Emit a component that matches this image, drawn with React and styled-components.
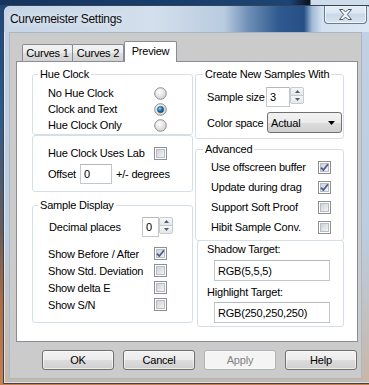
import React from 'react';
import styled, { createGlobalStyle } from 'styled-components';

const Global = createGlobalStyle`
  html, body { margin: 0; padding: 0; }
  body {
    width: 369px; height: 385px; overflow: hidden;
    font-family: "Liberation Sans", Arial, sans-serif;
    font-size: 11px; letter-spacing: -0.2px; color: #000;
  }
`;

const Desktop = styled.div`
  width: 369px; height: 385px; overflow: hidden; box-sizing: border-box;
  padding: 5px 0 0 3px;
  background:
    linear-gradient(90deg, #15345e 0, #1c4474 290px, #0b1628 307px, #0b1628 310px, #cfdcea 311px) top / 100% 5px no-repeat,
    linear-gradient(180deg, #1d4677 0, #2b5a8b 110px, #6a5a58 230px, #b06a3c 300px, #c98049 385px);
`;

const Window = styled.div`
  width: 370px; height: 379px; box-sizing: border-box;
  border: 1px solid #34455a; border-radius: 7px 7px 0 0;
  background: linear-gradient(180deg, #c2d2e4 0, #bccde0 60%, #c7b7a8 100%);
  box-shadow: inset 0 0 0 1px rgba(255,255,255,0.55);
  display: flex; flex-direction: column;
  overflow: hidden;
`;

const TitleBar = styled.div`
  height: 26px; flex: none;
  display: flex; align-items: flex-start;
  background: linear-gradient(90deg, #c6d5e6 0, #d3dfec 150px, #b9cbe0 220px, #6d8db5 245px, #2f5a8f 275px, #264f85 300px, #9fb9d6 308px, #d3e1f0 318px, #dce7f3 370px);
  border-radius: 6px 6px 0 0;
`;

const Title = styled.div`
  height: 26px; line-height: 26px;
  padding-left: 6px;
  font-size: 12px; letter-spacing: -0.3px;
  color: #0c0c0c;
  text-shadow: 0 0 6px rgba(255,255,255,0.9);
  flex: 1;
`;

const CloseButton = styled.div`
  width: 43px; height: 19px; box-sizing: border-box;
  margin: -1px 5px 0 0;
  border: 1px solid #6b7a8e; border-top: none;
  border-radius: 0 0 4px 4px;
  background: linear-gradient(180deg, #e9f0f7 0, #dbe6f1 45%, #c9d8e8 50%, #d6e3f0 100%);
  box-shadow: inset 0 0 0 1px rgba(255,255,255,0.7);
  display: flex; align-items: center; justify-content: center;
`;

const Client = styled.div`
  width: 353px; height: 347px; box-sizing: border-box;
  margin-left: 5px; flex: none;
  background: #cbcbcb;
  border: 1px solid #aab6c4;
  display: flex; flex-direction: column;
`;

const TabStrip = styled.div`
  display: flex; align-items: flex-end;
  height: 20px; margin: 8px 0 0 12px;
  position: relative; z-index: 1;
`;

const Tab = styled.div`
  box-sizing: border-box;
  width: ${p => p.$w}px;
  height: ${p => (p.$active ? 21 : 17)}px;
  margin-left: ${p => p.$ml || 0}px;
  margin-bottom: ${p => (p.$active ? -1 : 0)}px;
  border: 1px solid #898c95; border-bottom: none;
  border-radius: 2px 2px 0 0;
  background: ${p => (p.$active ? '#ffffff' : 'linear-gradient(180deg, #f3f3f3 0, #ebebeb 50%, #dedede 50%, #d2d2d2 100%)')};
  display: flex; align-items: center; justify-content: center;
  padding-bottom: ${p => (p.$active ? 3 : 0)}px;
`;

const Panel = styled.div`
  width: 342px; height: 281px; box-sizing: border-box;
  margin-left: 6px;
  border: 1px solid #898c95;
  background: #fff;
  display: flex; gap: 2px;
  padding: 5px 0 0 15px;
`;

const Column = styled.div`
  width: ${p => p.$w}px; flex: none;
  display: flex; flex-direction: column;
`;

const Group = styled.fieldset`
  margin: ${p => p.$mt || 0}px 0 0 ${p => p.$ml || 0}px;
  padding: 0;
  border: 1px solid #d5dfe5;
  border-radius: 3px;
  min-width: 0;
  box-sizing: border-box;
`;

const Legend = styled.legend`
  margin-left: ${p => p.$ml}px;
  padding: 0 2px;
  height: 14px; line-height: 14px;
`;

const GroupBody = styled.div`
  padding: ${p => p.$pt}px 0 ${p => p.$pb}px ${p => p.$pl || 0}px;
  display: flex; flex-direction: column;
`;

const OptionRow = styled.div`
  height: ${p => p.$h}px;
  margin-top: ${p => p.$mt || 0}px;
  padding: 0 ${p => p.$pr || 0}px 0 ${p => p.$pl || 0}px;
  display: flex; align-items: center; justify-content: space-between;
`;

const FieldRow = styled.div`
  height: ${p => p.$h}px;
  margin-top: ${p => p.$mt || 0}px;
  padding-left: ${p => p.$pl || 0}px;
  display: flex; align-items: center;
`;

const Label = styled.span`
  width: ${p => (p.$w ? `${p.$w}px` : 'auto')};
  flex: none;
  margin-left: ${p => p.$ml || 0}px;
  white-space: nowrap;
`;

const TextBox = styled.div`
  box-sizing: border-box;
  width: ${p => p.$w}px; height: ${p => p.$h}px;
  margin-left: ${p => p.$ml || 0}px;
  margin-top: ${p => p.$mt || 0}px;
  border: 1px solid #c4c8ce;
  border-top-color: #b4b8bf;
  background: #fff;
  padding-left: 3px;
  display: flex; align-items: center;
  flex: none;
`;

const SpinButtons = styled.div`
  width: 14px; flex: none;
  display: flex; flex-direction: column;
  align-self: flex-start;
`;

const SpinBtn = styled.div`
  height: 9px; box-sizing: border-box;
  border: 1px solid #c6cbd2;
  border-radius: ${p => (p.$up ? '2px 2px 0 0' : '0 0 2px 2px')};
  margin-top: ${p => (p.$up ? 0 : -1)}px;
  background: linear-gradient(180deg, #f7f7f7 0, #e6e6e6 100%);
  display: flex; align-items: center; justify-content: center;
`;

const Select = styled.div`
  box-sizing: border-box;
  width: ${p => p.$w}px; height: 21px;
  border: 1px solid #707070; border-radius: 3px;
  background: linear-gradient(180deg, #f2f2f2 0, #ebebeb 50%, #dddddd 50%, #cfcfcf 100%);
  display: flex; align-items: center; justify-content: space-between;
  padding: 0 6px 0 3px;
`;

const TargetLabel = styled.div`
  height: 15px; line-height: 15px;
  margin-top: ${p => p.$mt || 0}px;
`;

const ButtonRow = styled.div`
  display: flex; gap: 9px;
  margin: 8px 0 0 32px;
`;

const Button = styled.div`
  width: 72px; height: 20px; box-sizing: border-box;
  border: 1px solid ${p => (p.$disabled ? '#adb2b5' : '#707070')};
  border-radius: 3px;
  background: ${p => (p.$disabled ? '#f4f4f4' : 'linear-gradient(180deg, #f2f2f2 0, #ebebeb 50%, #dddddd 50%, #cfcfcf 100%)')};
  box-shadow: inset 0 0 0 1px ${p => (p.$disabled ? 'rgba(255,255,255,0.4)' : 'rgba(255,255,255,0.6)')};
  color: ${p => (p.$disabled ? '#838383' : '#000')};
  display: flex; align-items: center; justify-content: center;
`;

function Radio({ checked }) {
  return (
    <svg width="13" height="13" viewBox="0 0 13 13">
      <defs>
        <radialGradient id="rbg" cx="40%" cy="35%" r="70%">
          <stop offset="0" stopColor="#ffffff" />
          <stop offset="1" stopColor="#cfcfcf" />
        </radialGradient>
        <radialGradient id="rdot" cx="40%" cy="35%" r="70%">
          <stop offset="0" stopColor="#9fd8f7" />
          <stop offset="0.45" stopColor="#2a7fb8" />
          <stop offset="1" stopColor="#0d3c62" />
        </radialGradient>
      </defs>
      <circle cx="6.5" cy="6.5" r="5.8" fill="url(#rbg)" stroke="#8e8f8f" strokeWidth="1" />
      {checked && <circle cx="6.5" cy="6.5" r="3.2" fill="url(#rdot)" stroke="#1b4e78" strokeWidth="0.5" />}
    </svg>
  );
}

function Check({ checked }) {
  return (
    <svg width="13" height="13" viewBox="0 0 13 13">
      <defs>
        <linearGradient id="cbg" x1="0" y1="0" x2="1" y2="1">
          <stop offset="0" stopColor="#cbcfd5" />
          <stop offset="1" stopColor="#f6f6f6" />
        </linearGradient>
      </defs>
      <rect x="0.5" y="0.5" width="12" height="12" fill="#fff" stroke="#8e8f8f" />
      <rect x="2.5" y="2.5" width="8" height="8" fill="url(#cbg)" stroke="#b8bcc4" strokeWidth="1" />
      {checked && (
        <path d="M3 6.6 L5.4 9 L10 3.2" fill="none" stroke="#4a5f97" strokeWidth="1.8" strokeLinejoin="round" />
      )}
    </svg>
  );
}

function Arrow({ up }) {
  return (
    <svg width="5" height="3" viewBox="0 0 5 3">
      <path d={up ? 'M0 3 L2.5 0 L5 3 Z' : 'M0 0 L5 0 L2.5 3 Z'} fill="#4d5e7a" />
    </svg>
  );
}

function Spinner() {
  return (
    <SpinButtons>
      <SpinBtn $up><Arrow up /></SpinBtn>
      <SpinBtn><Arrow /></SpinBtn>
    </SpinButtons>
  );
}

function CloseGlyph() {
  return (
    <svg width="13" height="11" viewBox="0 0 13 11">
      <path
        d="M0.5 0.5 H4 L6.5 3 L9 0.5 H12.5 L8.3 5.5 L12.5 10.5 H9 L6.5 8 L4 10.5 H0.5 L4.7 5.5 Z"
        fill="#f3f6f9" stroke="#4f5a68" strokeWidth="1" strokeLinejoin="round"
      />
    </svg>
  );
}

export default function App() {
  return (
    <>
      <Global />
      <Desktop>
        <Window>
          <TitleBar>
            <Title>Curvemeister Settings</Title>
            <CloseButton><CloseGlyph /></CloseButton>
          </TitleBar>
          <Client>
            <TabStrip>
              <Tab $w={51}>Curves 1</Tab>
              <Tab $w={52} $ml={-1}>Curves 2</Tab>
              <Tab $w={53} $active>Preview</Tab>
            </TabStrip>
            <Panel>
              <Column $w={161}>
                <Group>
                  <Legend $ml={5}>Hue Clock</Legend>
                  <GroupBody $pt={4} $pb={1}>
                    <OptionRow $h={16} $pl={15} $pr={25}><Label>No Hue Clock</Label><Radio /></OptionRow>
                    <OptionRow $h={16} $pl={15} $pr={25}><Label>Clock and Text</Label><Radio checked /></OptionRow>
                    <OptionRow $h={16} $pl={15} $pr={25}><Label>Hue Clock Only</Label><Radio /></OptionRow>
                  </GroupBody>
                </Group>
                <Group>
                  <GroupBody $pt={9} $pb={7}>
                    <OptionRow $h={16} $pl={15} $pr={25}><Label>Hue Clock Uses Lab</Label><Check /></OptionRow>
                    <FieldRow $h={20} $mt={3} $pl={15}>
                      <Label $w={32}>Offset</Label>
                      <TextBox $w={32} $h={20}>0</TextBox>
                      <Label $ml={4}>+/- degrees</Label>
                    </FieldRow>
                  </GroupBody>
                </Group>
                <Group $mt={6}>
                  <Legend $ml={5}>Sample Display</Legend>
                  <GroupBody $pt={5} $pb={9}>
                    <FieldRow $h={20} $pl={16}>
                      <Label $w={93}>Decimal places</Label>
                      <TextBox $w={17} $h={20}>0</TextBox>
                      <Spinner />
                    </FieldRow>
                    <OptionRow $h={17} $mt={8} $pl={15} $pr={25}><Label>Show Before / After</Label><Check checked /></OptionRow>
                    <OptionRow $h={17} $pl={15} $pr={25}><Label>Show Std. Deviation</Label><Check /></OptionRow>
                    <OptionRow $h={17} $pl={15} $pr={25}><Label>Show delta E</Label><Check /></OptionRow>
                    <OptionRow $h={17} $pl={15} $pr={25}><Label>Show S/N</Label><Check /></OptionRow>
                  </GroupBody>
                </Group>
              </Column>
              <Column $w={149}>
                <Group>
                  <Legend $ml={7}>Create New Samples With</Legend>
                  <GroupBody $pt={6} $pb={5}>
                    <FieldRow $h={20} $pl={11}>
                      <Label $w={59}>Sample size</Label>
                      <TextBox $w={24} $h={20}>3</TextBox>
                      <Spinner />
                    </FieldRow>
                    <FieldRow $h={21} $mt={5} $pl={11}>
                      <Label $w={60}>Color space</Label>
                      <Select $w={75}>
                        <span>Actual</span>
                        <svg width="7" height="4" viewBox="0 0 7 4"><path d="M0 0 H7 L3.5 4 Z" fill="#000" /></svg>
                      </Select>
                    </FieldRow>
                  </GroupBody>
                </Group>
                <Group $mt={3}>
                  <Legend $ml={7}>Advanced</Legend>
                  <GroupBody $pt={1} $pb={3}>
                    <OptionRow $h={20} $pl={15} $pr={12}><Label>Use offscreen buffer</Label><Check checked /></OptionRow>
                    <OptionRow $h={20} $pl={15} $pr={12}><Label>Update during drag</Label><Check checked /></OptionRow>
                    <OptionRow $h={20} $pl={15} $pr={12}><Label>Support Soft Proof</Label><Check /></OptionRow>
                    <OptionRow $h={20} $pl={15} $pr={12}><Label>Hibit Sample Conv.</Label><Check /></OptionRow>
                  </GroupBody>
                </Group>
                <Group $mt={-1} $ml={2}>
                  <GroupBody $pt={1} $pb={3} $pl={9}>
                    <TargetLabel>Shadow Target:</TargetLabel>
                    <TextBox $w={116} $h={21} $ml={7} $mt={3}>RGB(5,5,5)</TextBox>
                    <TargetLabel $mt={4}>Highlight Target:</TargetLabel>
                    <TextBox $w={116} $h={21} $ml={7} $mt={2}>RGB(250,250,250)</TextBox>
                  </GroupBody>
                </Group>
              </Column>
            </Panel>
            <ButtonRow>
              <Button>OK</Button>
              <Button>Cancel</Button>
              <Button $disabled>Apply</Button>
              <Button>Help</Button>
            </ButtonRow>
          </Client>
        </Window>
      </Desktop>
    </>
  );
}
